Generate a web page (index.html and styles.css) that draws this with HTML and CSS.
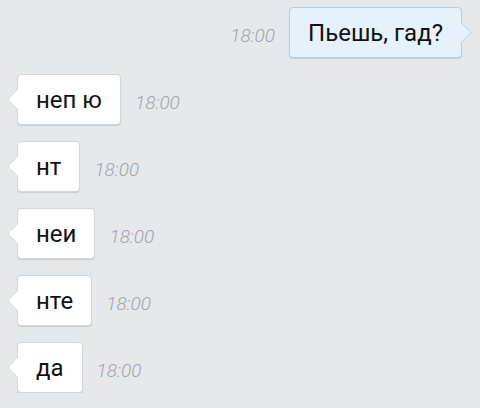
FILE: index.html
```html
<!DOCTYPE html>
<html lang="ru">
<head>
    <meta charset="UTF-8">
    <meta name="viewport" content="width=device-width, initial-scale=1.0">
    <title>Чат</title>
    <link rel="stylesheet" href="styles.css">
</head>
<body>
    <div class="chat">
        <div class="row out">
            <span class="time">18:00</span>
            <div class="bubble">Пьешь, гад?</div>
        </div>
        <div class="row in">
            <div class="bubble">неп ю</div>
            <span class="time">18:00</span>
        </div>
        <div class="row in">
            <div class="bubble">нт</div>
            <span class="time">18:00</span>
        </div>
        <div class="row in">
            <div class="bubble">неи</div>
            <span class="time">18:00</span>
        </div>
        <div class="row in">
            <div class="bubble">нте</div>
            <span class="time">18:00</span>
        </div>
        <div class="row in">
            <div class="bubble">да</div>
            <span class="time">18:00</span>
        </div>
    </div>
</body>
</html>
```

FILE: styles.css
```css
body{
    margin: 0;
    background: #e6e9ec;
    font-family: Roboto, "Noto Sans", sans-serif;
}
.chat{
    display: flex;
    flex-direction: column;
    gap: 16px;
    padding: 7px 18px 0 17px;
}
.row{
    display: flex;
    align-items: center;
    gap: 14px;
    height: 51px;
}
.out{
    justify-content: flex-end;
}
.bubble{
    position: relative;
    height: 51px;
    box-sizing: border-box;
    display: flex;
    align-items: center;
    padding: 1px 18px 0 18px;
    font-size: 24px;
    color: #111;
    background: #fff;
    border: 1px solid #d3d6da;
    border-radius: 4px;
    box-shadow: 0 1px 1px rgba(0,0,0,.12);
}
.in .bubble::before{
    content: "";
    position: absolute;
    left: -8px;
    top: 17px;
    width: 14px;
    height: 14px;
    background: #fff;
    border-left: 1px solid #d3d6da;
    border-bottom: 1px solid #d3d6da;
    border-bottom-left-radius: 2px;
    transform: rotate(45deg);
}
.out .bubble{
    background: #e5f1fb;
    border-color: #bccbd8;
}
.out .bubble::after{
    content: "";
    position: absolute;
    right: -8px;
    top: 17px;
    width: 14px;
    height: 14px;
    background: #e5f1fb;
    border-right: 1px solid #bccbd8;
    border-top: 1px solid #bccbd8;
    border-top-right-radius: 2px;
    transform: rotate(45deg);
}
.time{
    font-size: 19px;
    font-style: italic;
    font-weight: 300;
    color: #a0a4a9;
    padding-top: 6px;
}
```
